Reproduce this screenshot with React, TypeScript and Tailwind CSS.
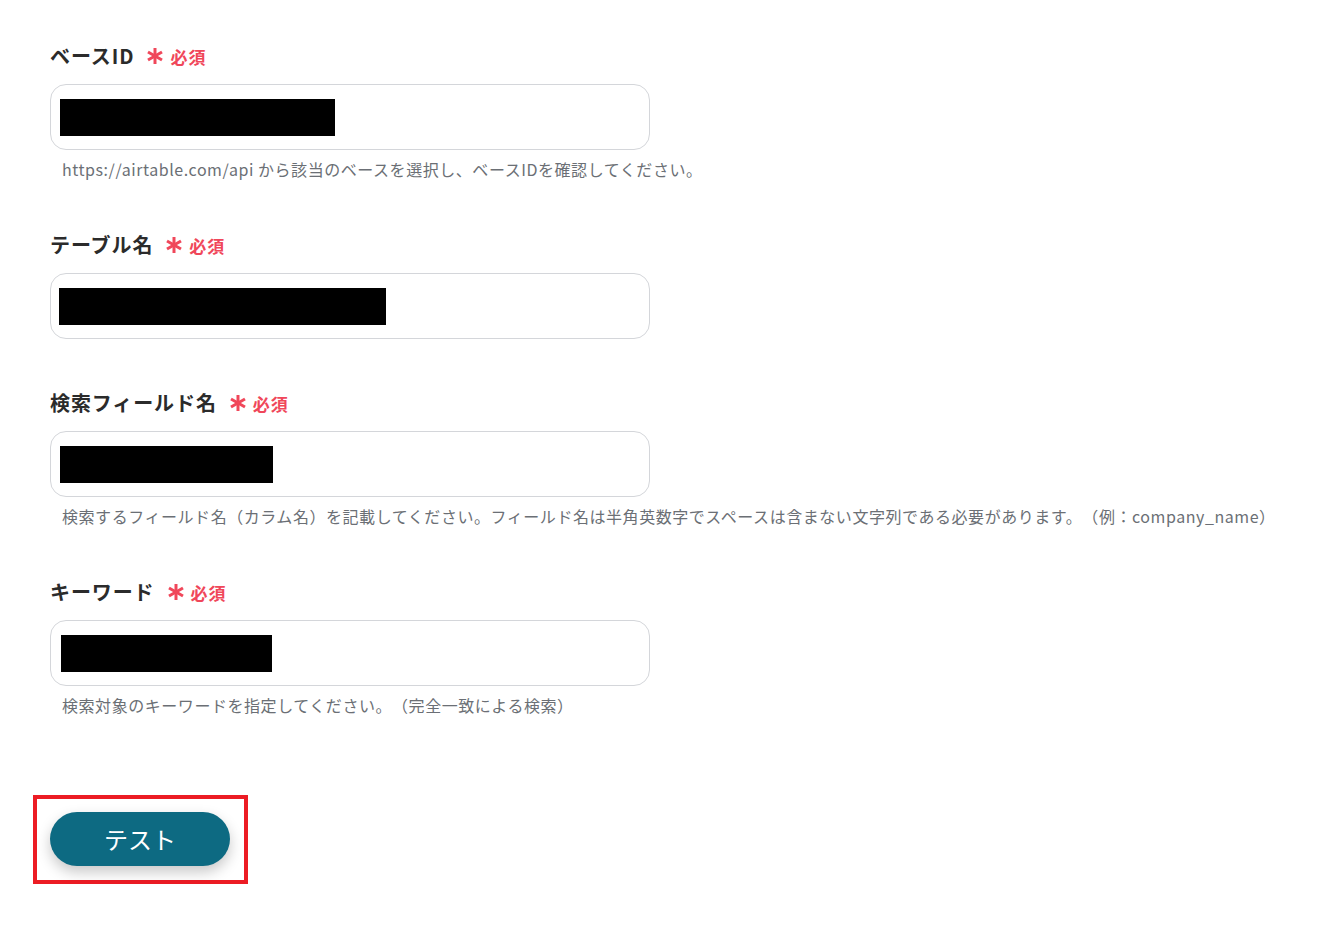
import React from 'react';

interface Field {
  label: string;
  redactWidth: number;
  redactOffset: number;
  help?: string;
}

const fields: Field[] = [
  {
    label: 'ベースID',
    redactWidth: 275,
    redactOffset: 10,
    help: 'https://airtable.com/api から該当のベースを選択し、ベースIDを確認してください。',
  },
  { label: 'テーブル名', redactWidth: 327, redactOffset: 9 },
  {
    label: '検索フィールド名',
    redactWidth: 213,
    redactOffset: 10,
    help: '検索するフィールド名（カラム名）を記載してください。フィールド名は半角英数字でスペースは含まない文字列である必要があります。（例：company_name）',
  },
  {
    label: 'キーワード',
    redactWidth: 211,
    redactOffset: 11,
    help: '検索対象のキーワードを指定してください。（完全一致による検索）',
  },
];

// six-armed required mark
function RequiredMark() {
  return (
    <svg width="18" height="18" viewBox="0 0 18 18" className="shrink-0">
      <g stroke="#f0475a" strokeWidth="3" strokeLinecap="butt">
        <line x1="9" y1="1" x2="9" y2="17" />
        <line x1="2" y1="5" x2="16" y2="13" />
        <line x1="2" y1="13" x2="16" y2="5" />
      </g>
    </svg>
  );
}

export default function App() {
  return (
    <div
      className="min-h-screen bg-white pl-[50px] pt-[42px] [text-spacing-trim:space-all]"
      style={{ fontFamily: '"Noto Sans CJK JP", "Noto Sans", sans-serif' }}
    >
      {fields.map((field, i) => (
        <div key={i} className={i < fields.length - 1 ? 'mb-[50px]' : ''}>
          {/* label row */}
          <div className="flex items-center h-[28px] gap-[12px]">
            <span className="text-[20px] font-bold text-[#2b2b2b] leading-none tracking-[0.9px]">
              {field.label}
            </span>
            <div className="flex items-center gap-[6px]">
              <RequiredMark />
              <span className="text-[17px] font-bold text-[#f0475a] leading-none tracking-[1px]">必須</span>
            </div>
          </div>

          {/* input */}
          <div className="mt-[14px] w-[600px] h-[66px] border border-[#d4d6da] rounded-2xl bg-white flex items-center">
            <div
              className="h-[37px] bg-black"
              style={{ width: field.redactWidth, marginLeft: field.redactOffset - 1 }}
            />
          </div>

          {field.help && (
            <p className="mt-[7px] pl-3 text-[16px] leading-[24px] text-[#6b6f75] whitespace-nowrap tracking-[0.55px]">
              {field.help}
            </p>
          )}
        </div>
      ))}

      {/* test button, highlighted */}
      <div className="mt-[78px] -ml-[17px] w-[215px] border-4 border-[#ec1c24] pt-[13px] pl-[13px] pb-[14px]">
        <button className="block w-[180px] h-[54px] rounded-full bg-[#0d6a82] text-white text-[24px] leading-none shadow-[0_6px_14px_rgba(0,0,0,0.22)]">
          テスト
        </button>
      </div>
    </div>
  );
}
